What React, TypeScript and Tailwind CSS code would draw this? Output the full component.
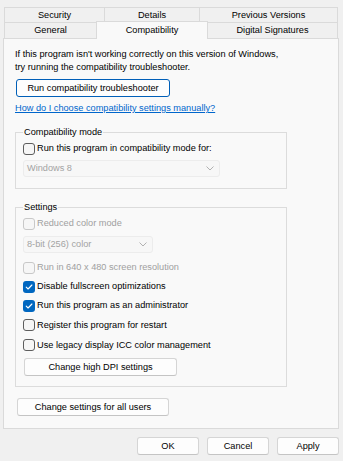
import type { ReactNode } from "react";

type CheckProps = {
  label: string;
  checked?: boolean;
  disabled?: boolean;
  className?: string;
};

function Check({ label, checked = false, disabled = false, className = "" }: CheckProps) {
  return (
    <div className={`flex h-[19px] items-center gap-[2px] ${className}`}>
      {checked ? (
        <span className="flex h-[12px] w-[12px] items-center justify-center rounded-[3px] bg-[#0067c0]">
          <svg width="10" height="10" viewBox="0 0 10 10" fill="none">
            <path d="M2.2 5.2 L4.1 7 L7.9 3" stroke="white" strokeWidth="1.1" strokeLinecap="round" strokeLinejoin="round" />
          </svg>
        </span>
      ) : (
        <span
          className={`h-[12px] w-[12px] rounded-[3px] border bg-[#f6f6f6] ${
            disabled ? "border-[#c8c8c8]" : "border-[#5d5d5d]"
          }`}
        />
      )}
      <span className={disabled ? "text-[#a0a0a0]" : "text-black"}>{label}</span>
    </div>
  );
}

function Combo({ value, className = "" }: { value: string; className?: string }) {
  return (
    <div
      className={`flex h-[17px] items-center justify-between rounded-[3px] border border-[#ececec] bg-[#f7f7f7] pl-[3px] pr-[5px] text-[#a3a3a3] ${className}`}
    >
      <span>{value}</span>
      <svg width="8" height="5" viewBox="0 0 8 5" fill="none">
        <path d="M0.5 0.5 L4 4 L7.5 0.5" stroke="#a8a8a8" strokeWidth="0.9" />
      </svg>
    </div>
  );
}

function Button({ children, className = "", primary = false }: { children: ReactNode; className?: string; primary?: boolean }) {
  return (
    <button
      type="button"
      className={`flex h-[18px] items-center justify-center rounded-[3px] border bg-[#fdfdfd] text-black ${
        primary ? "border-[#005fb8]" : "border-[#d5d5d5] border-b-[#c4c4c4]"
      } ${className}`}
    >
      {children}
    </button>
  );
}

function Group({ title, children, className = "" }: { title: string; children: ReactNode; className?: string }) {
  return (
    <fieldset className={`w-[272px] border border-[#dcdcdc] pl-[7px] pr-[7px] ${className}`}>
      <legend className="h-[13px] px-[1px] leading-[13px] text-black">{title}</legend>
      {children}
    </fieldset>
  );
}

const tab = "flex items-center justify-center border-t border-l border-[#dadada] bg-[#f0f0f0] text-black";

export default function App() {
  return (
    <div className="h-[461px] w-[343px] overflow-hidden bg-[#f0f0f0] pt-[7px] font-['Liberation_Sans',Arial,sans-serif] text-[9.2px] leading-[13px]">
      <div className="ml-[4px] flex h-[15px] w-[334px]">
        <div className={`${tab} w-[100px]`}>Security</div>
        <div className={`${tab} w-[95px]`}>Details</div>
        <div className={`${tab} w-[139px] border-r`}>Previous Versions</div>
      </div>
      <div className="ml-[4px] flex h-[16px] w-[334px] items-start">
        <div className={`${tab} h-[16px] w-[92px]`}>General</div>
        <div className="relative z-10 -mt-[1px] flex h-[18px] w-[112px] items-center justify-center border-x border-t border-[#dadada] bg-[#f9f9f9] pb-[1px] text-black">
          Compatibility
        </div>
        <div className={`${tab} h-[16px] w-[130px] border-r border-l-0`}>Digital Signatures</div>
      </div>

      <div className="ml-[3px] h-[391px] w-[336px] border border-[#dadada] bg-[#f9f9f9] pl-[11px] pt-[9px]">
        <p className="text-black">
          If this program isn't working correctly on this version of Windows,
          <br />
          try running the compatibility troubleshooter.
        </p>
        <Button primary className="ml-[1px] mt-[5px] w-[154px]">
          Run compatibility troubleshooter
        </Button>
        <a href="#" className="mt-[5px] block w-fit text-[#0066cc] underline">
          How do I choose compatibility settings manually?
        </a>

        <Group title="Compatibility mode" className="mt-[11px] pb-[11px]">
          <Check label="Run this program in compatibility mode for:" />
          <Combo value="Windows 8" className="mt-[2px] w-[197px]" />
        </Group>

        <Group title="Settings" className="mt-[12px] pb-[10px]">
          <Check label="Reduced color mode" disabled />
          <Combo value="8-bit (256) color" className="mt-[3px] w-[130px]" />
          <Check label="Run in 640 x 480 screen resolution" disabled className="mt-[5px]" />
          <Check label="Disable fullscreen optimizations" checked />
          <Check label="Run this program as an administrator" checked />
          <Check label="Register this program for restart" className="h-[20px]" />
          <Check label="Use legacy display ICC color management" className="h-[20px]" />
          <Button className="ml-[1px] mt-[3px] w-[153px]">Change high DPI settings</Button>
        </Group>

        <Button className="ml-[2px] mt-[11px] w-[152px]">Change settings for all users</Button>
      </div>

      <div className="mt-[8px] flex justify-end gap-[8px] pr-[4px]">
        <Button className="w-[62px]">OK</Button>
        <Button className="w-[62px]">Cancel</Button>
        <Button className="w-[62px]">Apply</Button>
      </div>
    </div>
  );
}
